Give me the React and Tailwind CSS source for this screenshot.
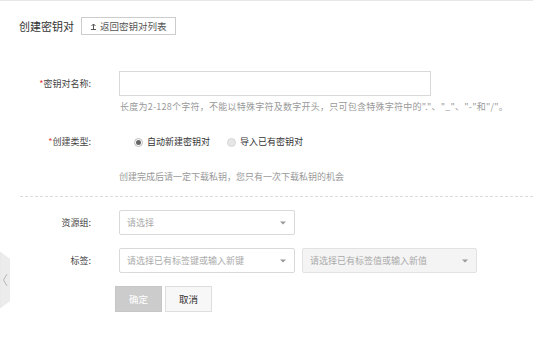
import React from 'react'

function Caret() {
  return (
    <svg width="6" height="4" viewBox="0 0 6 4" className="shrink-0">
      <path d="M0 0.5 L6 0.5 L3 3.5 Z" fill="#999" />
    </svg>
  )
}

function Select({ placeholder, width = 'w-[176px]', disabled = false }) {
  return (
    <div
      className={`${width} h-[25px] flex items-center justify-between pl-[7px] pr-[8px] border rounded-[2px] ${
        disabled ? 'bg-[#f4f4f4] border-[#e2e2e2]' : 'bg-white border-[#d9d9d9]'
      }`}
    >
      <span className="text-[9px] text-[#aaa]">{placeholder}</span>
      <Caret />
    </div>
  )
}

function Radio({ checked, label }) {
  return (
    <label className="flex items-center gap-[4px]">
      {checked ? (
        <span className="w-[9px] h-[9px] rounded-full border border-[#bbb] bg-white flex items-center justify-center">
          <span className="w-[5px] h-[5px] rounded-full bg-[#666]" />
        </span>
      ) : (
        <span className="w-[9px] h-[9px] rounded-full border border-[#d6d6d6] bg-[#e6e6e6]" />
      )}
      <span className="text-[9px] text-[#333]">{label}</span>
    </label>
  )
}

export default function App() {
  return (
    <div className="relative w-[533px] h-[363px] bg-white overflow-hidden font-['Noto_Sans_CJK_SC','Microsoft_YaHei',sans-serif] text-[#333]">
      <div className="h-px bg-[#e8e8e8]" />

      {/* Header */}
      <div className="pl-[19px] pt-[16px] flex items-center gap-[7px]">
        <span className="text-[11px] text-[#333] leading-[18px]">创建密钥对</span>
        <button className="h-[18px] px-[8px] flex items-center gap-[3px] border border-[#ccc] bg-white text-[9.5px] text-[#555]">
          <svg width="7" height="7" viewBox="0 0 7 7">
            <path d="M3.5 1 L3.5 6 M1.5 3 L3.5 1 L5.5 3 M1 6.5 L6 6.5" stroke="#555" strokeWidth="1" fill="none" />
          </svg>
          <span>返回密钥对列表</span>
        </button>
      </div>

      {/* Name */}
      <div className="mt-[36px] flex items-center">
        <div className="w-[91px] text-right text-[9px] text-[#444]">
          <span className="text-[#e4393c]">*</span>密钥对名称:
        </div>
        <div className="ml-[28px] w-[312px] h-[25px] border border-[#d9d9d9] bg-white" />
      </div>
      <div className="mt-[5px] ml-[120px] text-[9px] leading-[11px] tracking-[0.25px] text-[#999] whitespace-nowrap">
        长度为2-128个字符，不能以特殊字符及数字开头，只可包含特殊字符中的"."、"_"、"-"和"/"。
      </div>

      {/* Type */}
      <div className="mt-[23px] flex items-center h-[14px]">
        <div className="w-[91px] text-right text-[9px] text-[#444]">
          <span className="text-[#e4393c]">*</span>创建类型:
        </div>
        <div className="ml-[43px] flex items-center gap-[17px]">
          <Radio checked label="自动新建密钥对" />
          <Radio label="导入已有密钥对" />
        </div>
      </div>
      <div className="mt-[22px] ml-[119px] text-[9px] leading-[11px] text-[#999]">
        创建完成后请一定下载私钥，您只有一次下载私钥的机会
      </div>

      <div className="mt-[14px] ml-[20px] border-t border-dashed border-[#dcdcdc]" />

      {/* Resource group */}
      <div className="mt-[13px] flex items-center">
        <div className="w-[91px] text-right text-[9px] text-[#444]">资源组:</div>
        <div className="ml-[28px]">
          <Select placeholder="请选择" />
        </div>
      </div>

      {/* Tags */}
      <div className="mt-[13px] flex items-center">
        <div className="w-[91px] text-right text-[9px] text-[#444]">标签:</div>
        <div className="ml-[28px] flex items-center gap-[7px]">
          <Select placeholder="请选择已有标签键或输入新键" />
          <Select placeholder="请选择已有标签值或输入新值" width="w-[175px]" disabled />
        </div>
      </div>

      {/* Actions */}
      <div className="mt-[13px] ml-[115px] flex items-center gap-[3px]">
        <button className="w-[47px] h-[26px] bg-[#cccccc] border border-[#c6c6c6] text-white text-[9.5px]">确定</button>
        <button className="w-[47px] h-[26px] bg-[#f7f7f7] border border-[#dedede] text-[#333] text-[9.5px]">取消</button>
      </div>

      {/* Side collapse tab */}
      <svg className="absolute left-0 top-[252px]" width="10" height="56" viewBox="0 0 10 56">
        <path d="M0 0 L9.5 7 L9.5 49 L0 56 Z" fill="#ececec" stroke="#e0e0e0" strokeWidth="0.5" />
        <path d="M7 22 L3.5 28 L7 34" stroke="#aaa" strokeWidth="0.8" fill="none" />
      </svg>
    </div>
  )
}
